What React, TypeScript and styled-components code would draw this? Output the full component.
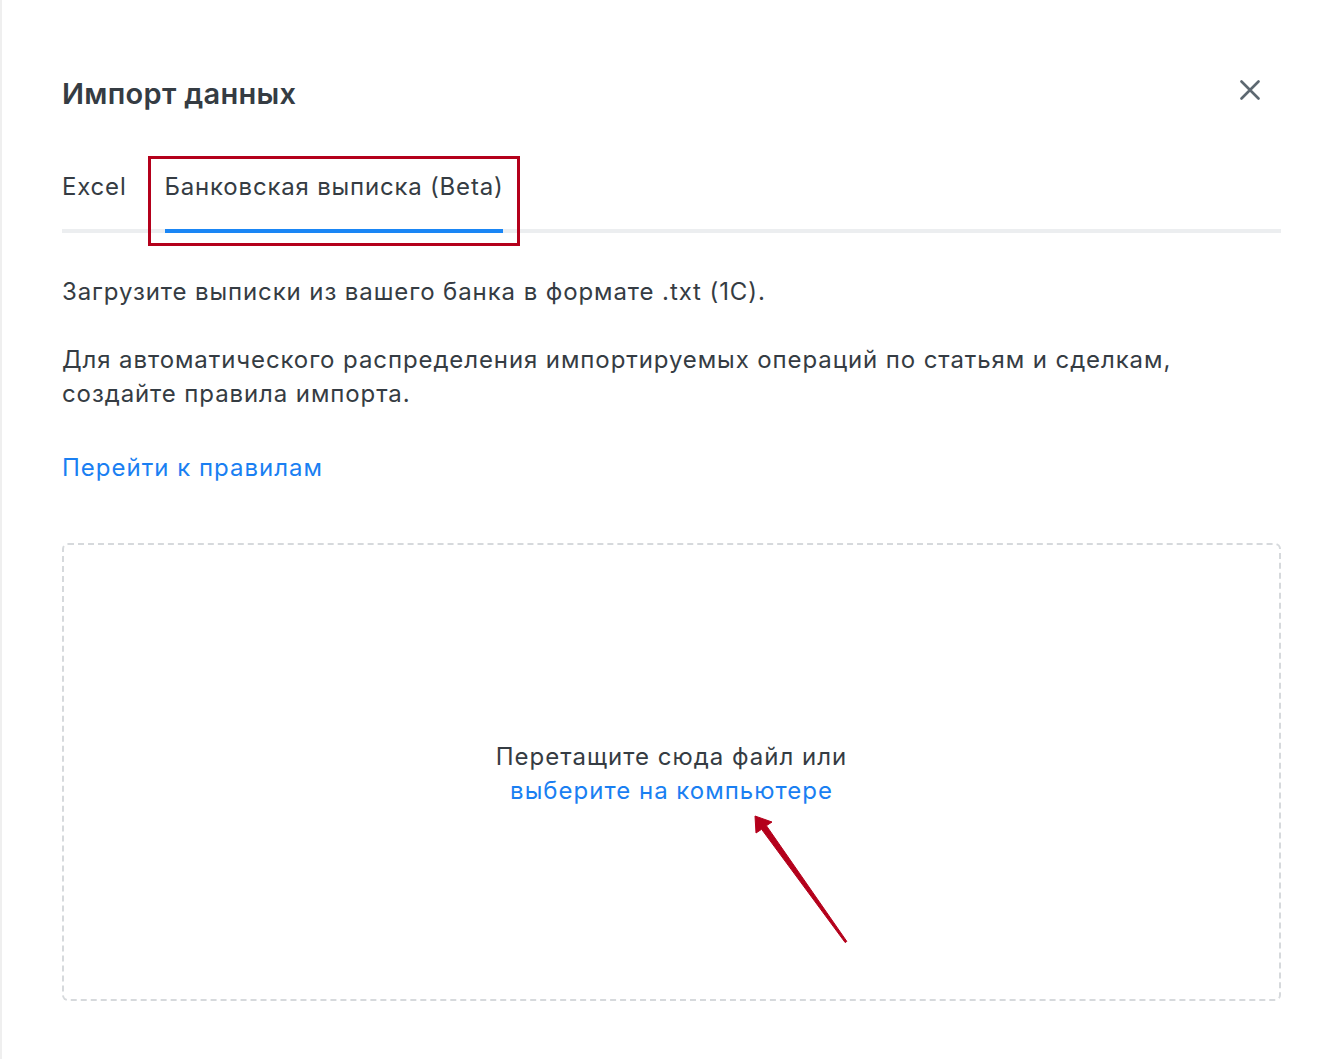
import React from "react";
import styled, { createGlobalStyle } from "styled-components";

const GlobalStyle = createGlobalStyle`
    html, body {
        margin: 0;
        padding: 0;
        background: #ffffff;
    }
    body {
        font-family: Inter, "Noto Sans", sans-serif;
        color: #353c43;
        -webkit-font-smoothing: antialiased;
    }
`;

const Modal = styled.div`
    position: relative;
    box-sizing: border-box;
    min-height: 1059px;
    padding: 72px 60px 0 60px;
    border-left: 2px solid #efefef;
`;

const Header = styled.div`
    display: flex;
    align-items: center;
    justify-content: space-between;
    height: 44px;
`;

const Title = styled.h1`
    margin: 0;
    font-size: 29px;
    line-height: 44px;
    font-weight: 600;
    color: #353c43;
    letter-spacing: 0.3px;
`;

const CloseButton = styled.button`
    display: flex;
    align-items: center;
    justify-content: center;
    width: 32px;
    height: 32px;
    margin: 0 15px 9px 0;
    padding: 0;
    border: none;
    background: none;
    color: #5d6871;
    cursor: pointer;
`;

const TabList = styled.div`
    display: flex;
    gap: 38px;
    margin-top: 54px;
    border-bottom: 4px solid #eceef0;
`;

const Tab = styled.div<{ $active?: boolean }>`
    position: relative;
    padding-bottom: 25px;
    margin-bottom: -4px;
    font-size: 24px;
    line-height: 34px;
    letter-spacing: 0.8px;
    color: #353c43;
    border-bottom: 4px solid ${({ $active }) => ($active ? "#1a86f5" : "transparent")};
`;

const Highlight = styled.span`
    position: absolute;
    top: -14px;
    left: -17px;
    right: -17px;
    bottom: -17px;
    border: 3px solid #b4001b;
    pointer-events: none;
`;

const Text = styled.p<{ $gap: number }>`
    margin: ${({ $gap }) => $gap}px 0 0;
    font-size: 24px;
    line-height: 34px;
    letter-spacing: 0.9px;
    color: #353c43;
`;

const Link = styled.a<{ $gap?: number }>`
    display: block;
    margin-top: ${({ $gap }) => $gap ?? 0}px;
    font-size: 24px;
    line-height: 34px;
    letter-spacing: 1px;
    color: #1a7ff2;
    text-decoration: none;
    cursor: pointer;
`;

const DropZone = styled.div`
    position: relative;
    box-sizing: border-box;
    height: 458px;
    margin-top: 58px;
    padding-top: 4px;
    border: 2px dashed #d6d9dc;
    border-radius: 6px;
    display: flex;
    flex-direction: column;
    align-items: center;
    justify-content: center;
    text-align: center;
`;

const DropText = styled.div`
    font-size: 24px;
    line-height: 34px;
    letter-spacing: 1px;
    color: #353c43;
`;

const DropLink = styled(Link)`
    display: inline;
`;

const Arrow = styled.svg`
    position: absolute;
    left: 675px;
    top: 253px;
    width: 120px;
    height: 150px;
    pointer-events: none;
`;

export default function App() {
    return (
        <>
            <GlobalStyle />
            <Modal>
                <Header>
                    <Title>Импорт данных</Title>
                    <CloseButton aria-label="Закрыть">
                        <svg width="20" height="20" viewBox="0 0 20 20" fill="none">
                            <path
                                d="M1.5 1.5 L18.5 18.5 M18.5 1.5 L1.5 18.5"
                                stroke="currentColor"
                                strokeWidth="2.6"
                                strokeLinecap="round"
                            />
                        </svg>
                    </CloseButton>
                </Header>

                <TabList>
                    <Tab>Excel</Tab>
                    <Tab $active>
                        Банковская выписка (Beta)
                        <Highlight />
                    </Tab>
                </TabList>

                <Text $gap={42}>Загрузите выписки из вашего банка в формате .txt (1С).</Text>
                <Text $gap={34}>
                    Для автоматического распределения импортируемых операций по статьям и сделкам,
                    <br />
                    создайте правила импорта.
                </Text>
                <Link $gap={40}>Перейти к правилам</Link>

                <DropZone>
                    <DropText>Перетащите сюда файл или</DropText>
                    <DropText>
                        <DropLink>выберите на компьютере</DropLink>
                    </DropText>
                    <Arrow viewBox="0 0 120 150">
                        <polygon
                            points="16,18 33,24 27.4,27.7 107.8,143.4 106.2,144.6 22.6,31.3 17,35"
                            fill="#b4001b"
                            stroke="#b4001b"
                            strokeWidth="1"
                            strokeLinejoin="round"
                        />
                    </Arrow>
                </DropZone>
            </Modal>
        </>
    );
}
